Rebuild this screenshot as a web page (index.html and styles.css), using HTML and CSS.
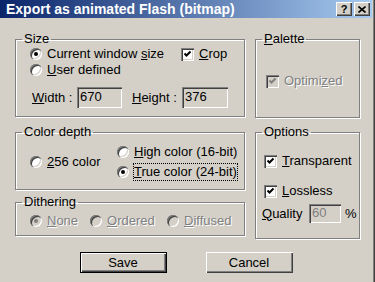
FILE: index.html
```html
<!DOCTYPE html>
<html lang="en">
<head>
    <meta charset="UTF-8">
    <meta name="viewport" content="width=device-width, initial-scale=1.0">
    <title>Export as animated Flash (bitmap)</title>
    <link rel="stylesheet" href="styles.css">
</head>
<body>
    <div class="window">
        <div class="titlebar">
            <span class="title">Export as animated Flash (bitmap)</span>
            <span class="caption-btns">
                <span class="cap-btn">?</span>
                <span class="cap-btn">
                    <svg width="8" height="7" viewBox="0 0 8 7"><path d="M0.5 0.5 L7.5 6.5 M7.5 0.5 L0.5 6.5" stroke="#000" stroke-width="1.6"/></svg>
                </span>
            </span>
        </div>

        <div class="client">
            <div class="panels">
                <div class="col col-main">
                    <fieldset class="group">
                        <legend>Size</legend>
                        <div class="inner size-inner">
                            <div class="row">
                                <label class="opt size-first"><span class="radio checked"></span><span>Current window <u>s</u>ize</span></label>
                                <label class="opt"><span class="check checked"><svg width="13" height="13" viewBox="0 0 13 13"><path d="M3.5 5.5 L5.5 7.5 L9.5 3.5" fill="none" stroke="#000" stroke-width="2"/></svg></span><span><u>C</u>rop</span></label>
                            </div>
                            <div class="row">
                                <label class="opt"><span class="radio"></span><span><u>U</u>ser defined</span></label>
                            </div>
                            <div class="dims">
                                <span class="field-label width-label"><u>W</u>idth :</span>
                                <span class="field field-w">670</span>
                                <span class="field-label height-label"><u>H</u>eight :</span>
                                <span class="field field-h">376</span>
                            </div>
                        </div>
                    </fieldset>

                    <fieldset class="group depth">
                        <legend>Color depth</legend>
                        <div class="inner depth-inner">
                            <label class="opt depth-256"><span class="radio"></span><span><u>2</u>56 color</span></label>
                            <div class="depth-right">
                                <label class="opt"><span class="radio"></span><span><u>H</u>igh color (16-bit)</span></label>
                                <label class="opt"><span class="radio checked"></span><span class="focus"><u>T</u>rue color (24-bit)</span></label>
                            </div>
                        </div>
                    </fieldset>

                    <fieldset class="group dither">
                        <legend>Dithering</legend>
                        <div class="inner dither-inner">
                            <label class="opt disabled dither-none"><span class="radio checked"></span><span><u>N</u>one</span></label>
                            <label class="opt disabled dither-ordered"><span class="radio"></span><span><u>O</u>rdered</span></label>
                            <label class="opt disabled"><span class="radio"></span><span><u>D</u>iffused</span></label>
                        </div>
                    </fieldset>
                </div>

                <div class="col col-side">
                    <fieldset class="group">
                        <legend><u>P</u>alette</legend>
                        <div class="inner palette-inner">
                            <label class="opt disabled"><span class="check checked"><svg width="13" height="13" viewBox="0 0 13 13"><path d="M3.5 5.5 L5.5 7.5 L9.5 3.5" fill="none" stroke="#808080" stroke-width="2"/></svg></span><span>Optimi<u>z</u>ed</span></label>
                        </div>
                    </fieldset>

                    <fieldset class="group options">
                        <legend>Options</legend>
                        <div class="inner options-inner">
                            <label class="opt"><span class="check checked"><svg width="13" height="13" viewBox="0 0 13 13"><path d="M3.5 5.5 L5.5 7.5 L9.5 3.5" fill="none" stroke="#000" stroke-width="2"/></svg></span><span><u>T</u>ransparent</span></label>
                            <label class="opt lossless"><span class="check checked"><svg width="13" height="13" viewBox="0 0 13 13"><path d="M3.5 5.5 L5.5 7.5 L9.5 3.5" fill="none" stroke="#000" stroke-width="2"/></svg></span><span><u>L</u>ossless</span></label>
                            <div class="quality">
                                <span class="quality-label"><u>Q</u>uality</span>
                                <span class="field field-q">60</span>
                                <span class="pct">%</span>
                            </div>
                        </div>
                    </fieldset>
                </div>
            </div>

            <div class="actions">
                <button class="btn default">Save</button>
                <button class="btn">Cancel</button>
            </div>
        </div>
    </div>
</body>
</html>
```

FILE: styles.css
```css
body { margin: 0; font-family: "Liberation Sans", Arial, sans-serif; font-size: 13px; color: #000; background: #d4d0c8; }
u { text-decoration: underline; text-underline-offset: 1px; }

.window { width: 375px; height: 282px; box-sizing: border-box; padding-right: 3px; background: #d4d0c8; box-shadow: inset -1px 0 #404040, inset -2px 0 #808080; overflow: hidden; }

.titlebar { height: 18px; display: flex; align-items: center; justify-content: space-between; background: linear-gradient(90deg, #0a246a, #a6caf0); }
.title { color: #fff; font-weight: bold; font-size: 14px; line-height: 18px; padding-left: 6px; }
.caption-btns { display: flex; gap: 2px; margin-right: 2px; }
.cap-btn {
    width: 16px; height: 14px; box-sizing: border-box; display: flex; align-items: center; justify-content: center;
    background: #d4d0c8; font-weight: bold; font-size: 11px; line-height: 14px;
    box-shadow: inset 1px 1px #fff, inset -1px -1px #404040, inset -2px -2px #808080;
}

.client { padding: 14px 0 0 15px; }
.panels { display: flex; gap: 10px; align-items: flex-start; }
.col { display: flex; flex-direction: column; }
.col-main { width: 230px; }
.col-side { width: 105px; }

.group { margin: 0; padding: 0; min-width: 0; border: 1px solid #808080; box-shadow: 1px 1px #fff, inset 1px 1px #fff; }
.group legend { margin-left: 6px; padding: 0 2px; line-height: 14px; }
.inner { padding-left: 14px; }

.row { display: flex; height: 16px; align-items: center; }
.opt { display: flex; align-items: center; gap: 5px; line-height: 16px; white-space: nowrap; }
.size-first { width: 151px; }
.size-inner { padding-bottom: 8px; }

.radio { width: 12px; height: 12px; border-radius: 50%; background: #fff; box-sizing: border-box; flex: none; position: relative;
    box-shadow: inset 1px 1px #808080, inset 2px 2px #404040, inset -1px -1px #fff, inset -2px -2px #d4d0c8; }
.radio.checked::after { content: ""; position: absolute; left: 4px; top: 4px; width: 4px; height: 4px; border-radius: 50%; background: #000; }
.check { width: 13px; height: 13px; background: #fff; flex: none; display: block;
    box-shadow: inset 1px 1px #808080, inset 2px 2px #404040, inset -1px -1px #fff, inset -2px -2px #d4d0c8; }
.check svg { display: block; }

.disabled { color: #808080; text-shadow: 1px 1px #fff; }
.disabled .radio { background: #d4d0c8; }
.disabled .radio.checked::after { background: #808080; }
.disabled .check { background: #d4d0c8; }

.dims { display: flex; align-items: center; margin-top: 9px; padding-left: 2px; }
.field-label { line-height: 16px; }
.width-label { width: 45px; }
.height-label { width: 50px; margin-left: 10px; }
.field { height: 21px; box-sizing: border-box; padding: 2px 0 0 3px; line-height: 15px; background: #d4d0c8;
    box-shadow: inset 1px 1px #808080, inset 2px 2px #404040, inset -1px -1px #fff, inset -2px -2px #d4d0c8; }
.field-w { width: 45px; }
.field-h { width: 46px; }

.depth { margin-top: 8px; }
.depth-inner { display: flex; align-items: center; padding-top: 5px; padding-bottom: 9px; }
.depth-256 { width: 87px; }
.depth-right { display: flex; flex-direction: column; gap: 4px; }
.focus { outline: 1px dotted #000; outline-offset: 0; }

.dither { margin-top: 5px; }
.dither-inner { display: flex; height: 16px; padding-top: 4px; padding-bottom: 6px; }
.dither-none { width: 60px; }
.dither-ordered { width: 77px; }

.palette-inner { padding-left: 10px; padding-top: 27px; height: 44px; }
.options { margin-top: 7px; }
.options-inner { padding: 14px 0 15px 8px; display: flex; flex-direction: column; }
.lossless { margin-top: 14px; }
.quality { display: flex; align-items: center; margin-top: 5px; margin-left: -2px; }
.quality-label { width: 47px; line-height: 16px; }
.field-q { width: 32px; height: 19px; padding-top: 1px; color: #808080; }
.pct { margin-left: 4px; }

.actions { display: flex; justify-content: center; gap: 39px; margin-top: 13px; padding-right: 15px; }
.btn { width: 87px; height: 21px; padding: 0; font-family: inherit; font-size: 13px; color: #000; background: #d4d0c8; border: none;
    box-shadow: inset 1px 1px #fff, inset -1px -1px #404040, inset -2px -2px #808080; }
.btn.default { border: 1px solid #000; box-shadow: inset 1px 1px #fff, inset -1px -1px #404040, inset -2px -2px #808080; }
```
